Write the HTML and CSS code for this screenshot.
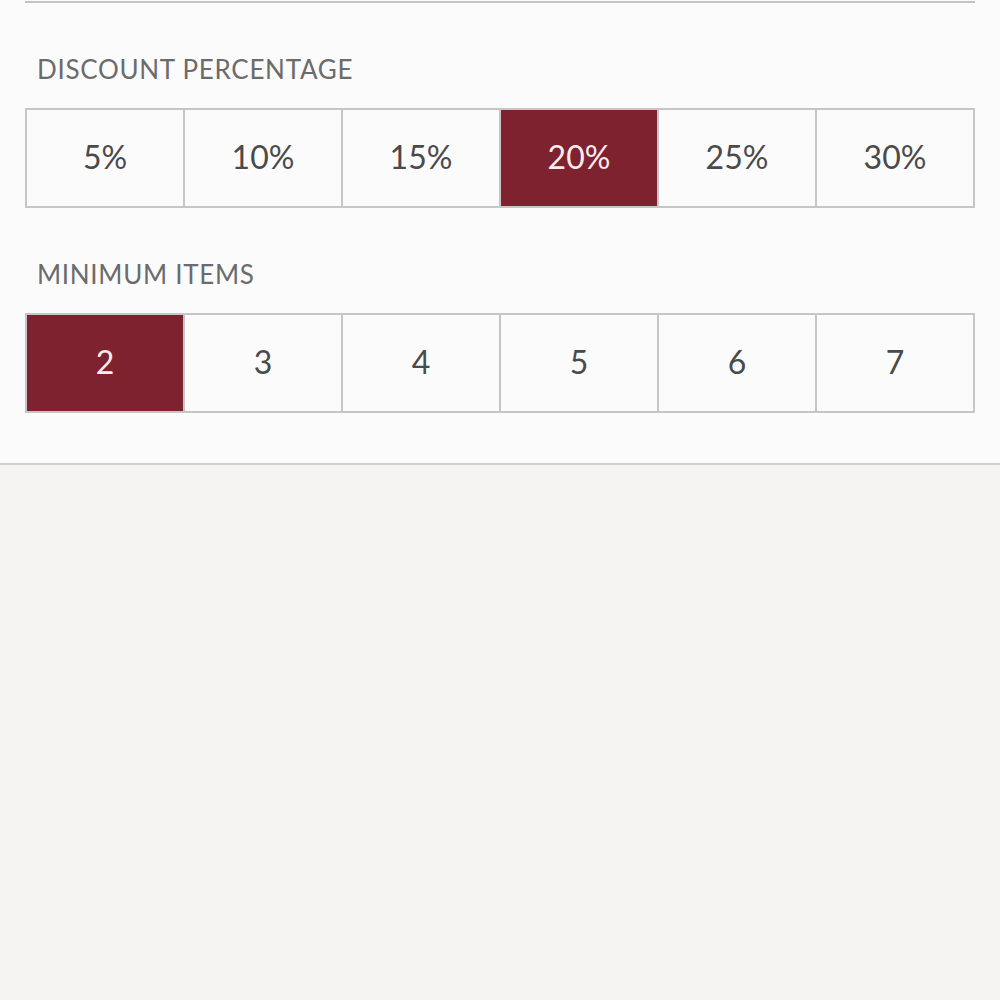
FILE: index.html
```html
<!DOCTYPE html>
<html lang="en">

<head>
    <meta charset="UTF-8">
    <meta name="viewport" content="width=device-width, initial-scale=1.0">
    <title>Discount Settings</title>
    <link rel="stylesheet" href="styles.css">
</head>

<body>
    <div class="panel">
        <div class="top-rule"></div>

        <div class="label">DISCOUNT PERCENTAGE</div>
        <div class="options">
            <div class="option">5%</div>
            <div class="option">10%</div>
            <div class="option">15%</div>
            <div class="option selected">20%</div>
            <div class="option">25%</div>
            <div class="option">30%</div>
        </div>

        <div class="label">MINIMUM ITEMS</div>
        <div class="options">
            <div class="option selected">2</div>
            <div class="option">3</div>
            <div class="option">4</div>
            <div class="option">5</div>
            <div class="option">6</div>
            <div class="option">7</div>
        </div>
    </div>
</body>

</html>
```

FILE: styles.css
```css
body {
    margin: 0;
    background-color: #f5f4f2;
    font-family: Lato, "Open Sans", sans-serif;
    height: 1000px;
}

.panel {
    background-color: #fcfbfb;
    border-bottom: 2px solid #cfcfcf;
    padding: 0 25px 50px 25px;
}

.top-rule {
    height: 1px;
    border-bottom: 2px solid #c4c4c4;
}

.label {
    margin-top: 50px;
    margin-bottom: 23px;
    padding-left: 12px;
    font-size: 26px;
    line-height: 32px;
    letter-spacing: 0.7px;
    color: #6b6b6b;
}

.options {
    display: grid;
    grid-template-columns: repeat(6, 1fr);
    border: 2px solid #c6c6c6;
    border-left: none;
    height: 96px;
}

.option {
    display: flex;
    justify-content: center;
    align-items: center;
    padding-bottom: 4px;
    font-size: 32px;
    color: #4a4a4a;
    border-left: 2px solid #c6c6c6;
}

.option.selected {
    background-color: #7f2230;
    color: #f7ecee;
}
```
